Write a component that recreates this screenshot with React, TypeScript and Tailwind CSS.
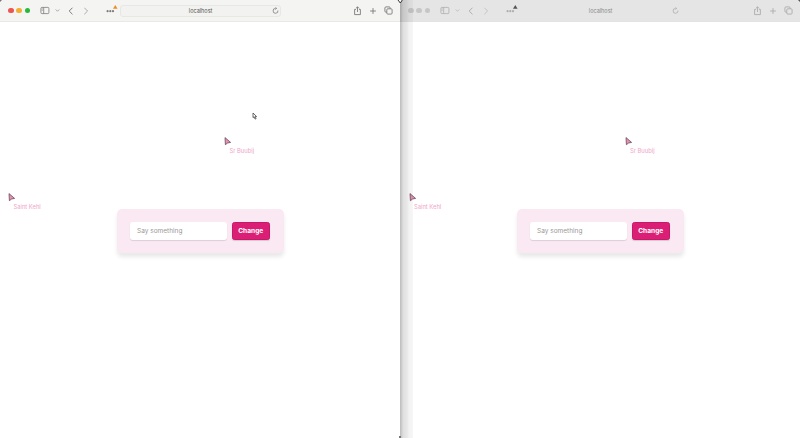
import React from "react";

function SidebarIcon() {
  return (
    <svg className="ml-[10px] h-[9px] w-[10px] shrink-0" viewBox="0 0 10 9" fill="none" stroke="currentColor" strokeWidth="0.8">
      <rect x="0.9" y="1.4" width="8" height="6.2" rx="1" />
      <path d="M3.7 1.4v6.2M1.7 2.9h1M1.7 4.3h1" />
    </svg>
  );
}

function Chevron({ d, className }: { d: string; className: string }) {
  return (
    <svg className={`shrink-0 ${className}`} viewBox="0 0 8 8" fill="none" stroke="currentColor" strokeWidth="1" strokeLinecap="round" strokeLinejoin="round">
      <path d={d} />
    </svg>
  );
}

function Toolbar({ active }: { active: boolean }) {
  const tone = active ? "bg-[#f4f4f2] border-[#e9e9e7] text-[#7c7c7c]" : "bg-[#e5e5e5] border-[#e3e3e3] text-[#adadad]";
  return (
    <div className={`flex h-[22px] w-full items-center border-b ${tone}`}>
      <div className="flex gap-[2.8px] pl-[8px]">
        <span className={`size-[5.5px] rounded-full ${active ? "bg-[#ec5550]" : "bg-[#c6c6c6]"}`} />
        <span className={`size-[5.5px] rounded-full ${active ? "bg-[#f3ae35]" : "bg-[#c6c6c6]"}`} />
        <span className={`size-[5.5px] rounded-full ${active ? "bg-[#27b93a]" : "bg-[#c6c6c6]"}`} />
      </div>
      <SidebarIcon />
      <Chevron className="ml-[5px] size-[5px]" d="M1.6 2.8L4 5.2L6.4 2.8" />
      <Chevron className="ml-[7px] size-[8px]" d="M5.2 1L2.2 4L5.2 7" />
      <Chevron className="ml-[7px] size-[8px] opacity-60" d="M2.6 1L5.6 4L2.6 7" />
      <svg className="ml-[15.5px] h-[12px] w-[13px] shrink-0" viewBox="0 0 13 12">
        <g fill="currentColor">
          <circle cx="1.6" cy="6.2" r="1.1" />
          <circle cx="4.3" cy="6.2" r="1.1" />
          <circle cx="7" cy="6.2" r="1.1" />
        </g>
        <path d="M9.3 0l2.3 3.7H7z" fill={active ? "#ee8f25" : "#555"} />
      </svg>
      <div className={`ml-[1px] flex h-[12px] w-[161.5px] shrink-0 items-center rounded-[3px] border ${active ? "border-[#e7e7e5] bg-[#f2f2f0]" : "border-transparent"}`}>
        <span className={`flex-1 pl-[9px] text-center text-[5.5px] leading-[10px] ${active ? "text-[#555]" : "text-[#8b8b8b]"}`}>localhost</span>
        <svg className="mr-[1.5px] size-[7px]" viewBox="0 0 8 8" fill="none" stroke="currentColor" strokeWidth="0.9">
          <path d="M6.8 4A2.8 2.8 0 1 1 4 1.6h1M3.9 0.3L5.3 1.6L3.9 3" />
        </svg>
      </div>
      <div className="ml-auto flex items-center gap-[7px] pr-[7px]">
        <svg className="h-[10px] w-[9px]" viewBox="0 0 9 10" fill="none" stroke="currentColor" strokeWidth="0.9">
          <path d="M3 3.4H1.6v5.2h5.8V3.4H6M4.5 6V0.9M2.9 2.4L4.5 0.8L6.1 2.4" />
        </svg>
        <svg className="size-[8px]" viewBox="0 0 8 8" fill="none" stroke="currentColor" strokeWidth="0.9">
          <path d="M4 1.1v5.8M1.1 4h5.8" />
        </svg>
        <svg className="size-[9px]" viewBox="0 0 9 9" fill="none" stroke="currentColor" strokeWidth="0.9">
          <rect x="2.8" y="2.8" width="5.3" height="5.3" rx="1" />
          <path d="M2.8 6.2H2a1.1 1.1 0 0 1-1.1-1.1V2A1.1 1.1 0 0 1 2 .9h3.1A1.1 1.1 0 0 1 6.2 2v.8" />
        </svg>
      </div>
    </div>
  );
}

function PeerCursor({ name, className }: { name: string; className: string }) {
  return (
    <div className={`absolute ${className}`}>
      <svg className="h-[9px] w-[8px]" viewBox="0 0 8 9" fill="#e391b5" stroke="#6e4a5b" strokeWidth="0.8" strokeLinejoin="round">
        <path d="M1 0.6L1.4 7.7L3.6 6L6.6 5.4Z" />
      </svg>
      <span className="block whitespace-nowrap pl-[5.5px] pt-px text-[5.8px] leading-[7px] text-[#efa6c8]">{name}</span>
    </div>
  );
}

function BrowserWindow({ active }: { active: boolean }) {
  return (
    <div className="relative flex h-full w-[400px] shrink-0 flex-col bg-white">
      <Toolbar active={active} />
      <main className="flex flex-1 flex-col items-center pt-[187px]">
        <div className="flex h-[44px] w-[167px] items-center gap-[5px] rounded-[5px] bg-[#fae9f3] pl-[13.5px] shadow-[0_4px_4px_rgba(0,0,0,0.09)]">
          <div className="flex h-[18px] w-[97px] items-center rounded-[3px] bg-white pl-[7px] pt-[2px] text-[6.5px] text-[#999] shadow-[0_1px_1px_rgba(0,0,0,0.12)]">
            Say something
          </div>
          <button className="h-[18px] w-[37.5px] rounded-[2.5px] border border-[#c81868] bg-[#dc1f76] text-[6.6px] font-bold leading-none text-white shadow-[0_1px_1px_rgba(0,0,0,0.15)]">
            Change
          </button>
        </div>
      </main>
      <PeerCursor name="Sr Buubij" className={active ? "left-[224px] top-[137px]" : "left-[224.5px] top-[137px]"} />
      <PeerCursor name="Saint Kehl" className={active ? "left-[8px] top-[193px]" : "left-[8.5px] top-[193px]"} />
    </div>
  );
}

export default function App() {
  return (
    <div className="relative flex h-[438px] w-[800px] overflow-hidden bg-white font-['Inter',sans-serif]">
      <BrowserWindow active />
      <BrowserWindow active={false} />
      <div className="pointer-events-none absolute left-[400px] top-0 h-full w-[13px] bg-[linear-gradient(90deg,rgba(0,0,0,0.25)_0px,rgba(0,0,0,0.23)_1px,rgba(0,0,0,0.13)_3px,rgba(0,0,0,0.09)_7px,rgba(0,0,0,0.05)_9px,rgba(0,0,0,0.035)_13px)]" />
      <svg className="absolute left-[252px] top-[112px] h-[8px] w-[6px]" viewBox="0 0 6 8" fill="white" stroke="#444" strokeWidth="0.8">
        <path d="M1 1v4.6l1.1-.8 1 2.3 1-.5-.9-2.1h1.4z" />
      </svg>
      <svg className="absolute left-[397px] top-0 h-[4px] w-[6px]" viewBox="0 0 6 4" fill="white" stroke="#333" strokeWidth="1">
        <path d="M1 0L3.3 3L5.3 0" />
      </svg>
      <svg className="absolute left-[798px] top-0 size-[2px]" viewBox="0 0 2 2"><path d="M0 0h2v2z" fill="#555" /></svg>
      <svg className="absolute left-0 top-0 size-[2px]" viewBox="0 0 2 2"><path d="M0 0h2L0 2z" fill="#777" /></svg>
      <span className="absolute bottom-0 left-[399px] h-[2px] w-[2px] bg-[#777]" />
    </div>
  );
}
